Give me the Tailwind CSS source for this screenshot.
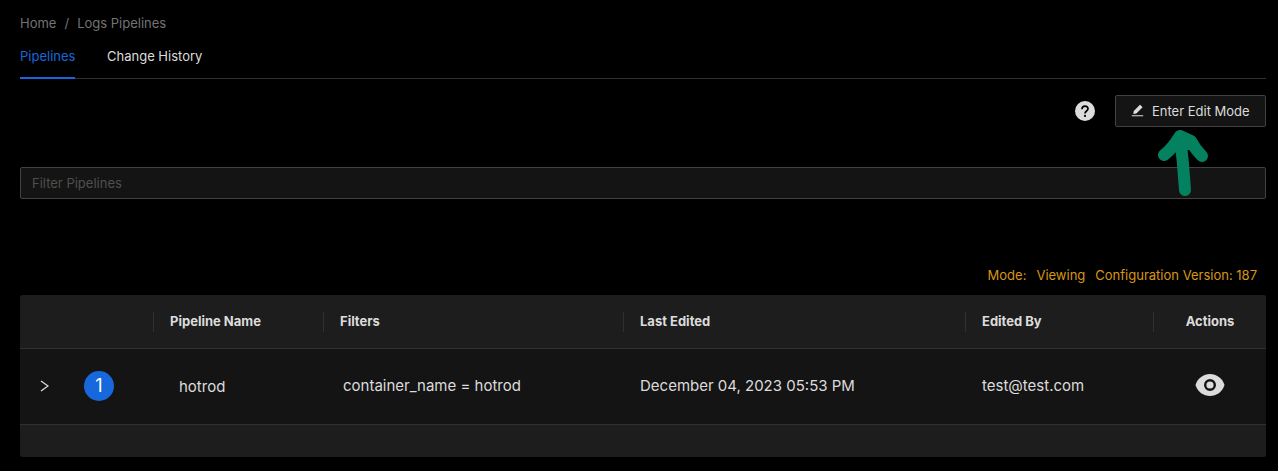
<!DOCTYPE html>
<html lang="en">
<head>
<meta charset="utf-8">
<title>Logs Pipelines</title>
<script src="https://cdn.jsdelivr.net/npm/@tailwindcss/browser@4"></script>
</head>
<body class="bg-black text-[13px] leading-[22px] font-['Inter',sans-serif] text-[#dcdcdc] h-[471px] overflow-hidden">
<main class="pl-5 pr-3">
  <nav class="flex gap-2 pt-3 h-[34px] text-[#737373]"><span>Home</span><span>/</span><span>Logs Pipelines</span></nav>
  <div class="flex h-[45px] border-b border-[#303030]">
    <div class="h-[45px] w-[55px] border-b-2 border-[#1668dc] text-[#1668dc] pt-[11px]">Pipelines</div>
    <div class="pt-[11px] ml-8">Change History</div>
  </div>
  <div class="flex justify-end items-center gap-5 mt-4 h-8">
    <svg class="w-5 h-5" viewBox="0 0 20 20"><circle cx="10" cy="10" r="10" fill="#dcdcdc"/><path d="M7 8.200c0-4.200 6-4 6-.5 0 2.400-3 2.200-3 4.800" fill="none" stroke="#000" stroke-width="1.700"/><circle cx="10" cy="14.900" r="1.100" fill="#000"/></svg>
    <button class="relative flex items-center gap-2 w-[151px] h-8 px-[15px] border border-[#424242] bg-[#141414] rounded-[2px]">
      <svg class="w-[13px] h-[13px] -mt-px" viewBox="64 64 896 896" fill="currentColor"><path d="M880 836H144c-17.700 0-32 14.300-32 32v36c0 4.400 3.600 8 8 8h784c4.400 0 8-3.600 8-8v-36c0-17.700-14.300-32-32-32zm-622.300-84c2 0 4-.2 6-.5L431.900 722c2-.4 3.900-1.300 5.300-2.800l423.900-423.900a9.960 9.960 0 0 0 0-14.100L694.900 114.900c-1.900-1.900-4.400-2.900-7.100-2.900s-5.200 1-7.100 2.900L256.800 538.800c-1.500 1.500-2.400 3.300-2.800 5.300l-29.500 168.200a33.500 33.500 0 0 0 9.400 29.800c6.600 6.400 14.900 9.900 23.800 9.900z"/></svg>
      <span class="whitespace-nowrap">Enter Edit Mode</span>
      <svg class="absolute left-[40px] top-[31px] w-[56px] h-[72px]" viewBox="0 0 56 72" fill="none" stroke="#04825f" stroke-width="12" stroke-linecap="round" stroke-linejoin="round"><path d="M29 63C28 47 26 25 24 9M24 9C19 17 15 23 8 28M24 9L35 14Q39 22 46 29M22 14L32 17"/></svg>
    </button>
  </div>
  <div class="mt-10 h-8 border border-[#424242] bg-[#141414] rounded-[2px] px-[11px] flex items-center text-[#4f4f4f]">Filter Pipelines</div>
  <div class="mt-[65px] h-[31px] pr-[9px] flex justify-end gap-[10px] text-[#d89614]"><span>Mode:</span><span>Viewing</span><span>Configuration Version: 187</span></div>
  <section class="bg-[#1d1d1d] h-[162px] w-[1246px] rounded-[2px]">
    <div class="grid grid-cols-[134px_170px_300px_342px_188px_112px] h-[54px] items-center border-b border-[#303030] font-bold">
      <div class="h-5 border-r border-[#303030]"></div>
      <div class="pl-4 h-5 leading-[18px] border-r border-[#303030]">Pipeline Name</div>
      <div class="pl-4 h-5 leading-[18px] border-r border-[#303030]">Filters</div>
      <div class="pl-4 h-5 leading-[18px] border-r border-[#303030]">Last Edited</div>
      <div class="pl-4 h-5 leading-[18px] border-r border-[#303030]">Edited By</div>
      <div class="text-center h-5 leading-[18px]">Actions</div>
    </div>
    <div class="grid grid-cols-[134px_170px_300px_342px_188px_112px] h-[76px] pb-[2px] items-center bg-[#141414] border-b border-[#303030] text-[15px]">
      <div class="flex items-center pl-5 gap-[35px]">
        <svg class="w-[9px] h-3" viewBox="0 0 9 12" fill="none" stroke="currentColor" stroke-width="1.300"><path d="M1 1l7 5-7 5"/></svg>
        <div class="w-[30px] h-[30px] rounded-full bg-[#1668dc] text-lg leading-[29px] text-center text-white">1</div>
      </div>
      <div class="pl-[25px] pt-[2px]">hotrod</div>
      <div class="pl-[19px]">container_name = hotrod</div>
      <div class="pl-4">December 04, 2023 05:53 PM</div>
      <div class="pl-4">test@test.com</div>
      <div class="flex justify-center"><svg class="w-[30px] h-[22px] -mt-[2px]" viewBox="0 0 30 22"><path d="M15 0C8.500 0 2.700 4 .5 11 2.700 18 8.500 22 15 22s12.300-4 14.500-11C27.300 4 21.500 0 15 0z" fill="#dcdcdc"/><circle cx="15" cy="11" r="4.800" fill="none" stroke="#141414" stroke-width="2.400"/></svg></div>
    </div>
  </section>
</main>
</body>
</html>
